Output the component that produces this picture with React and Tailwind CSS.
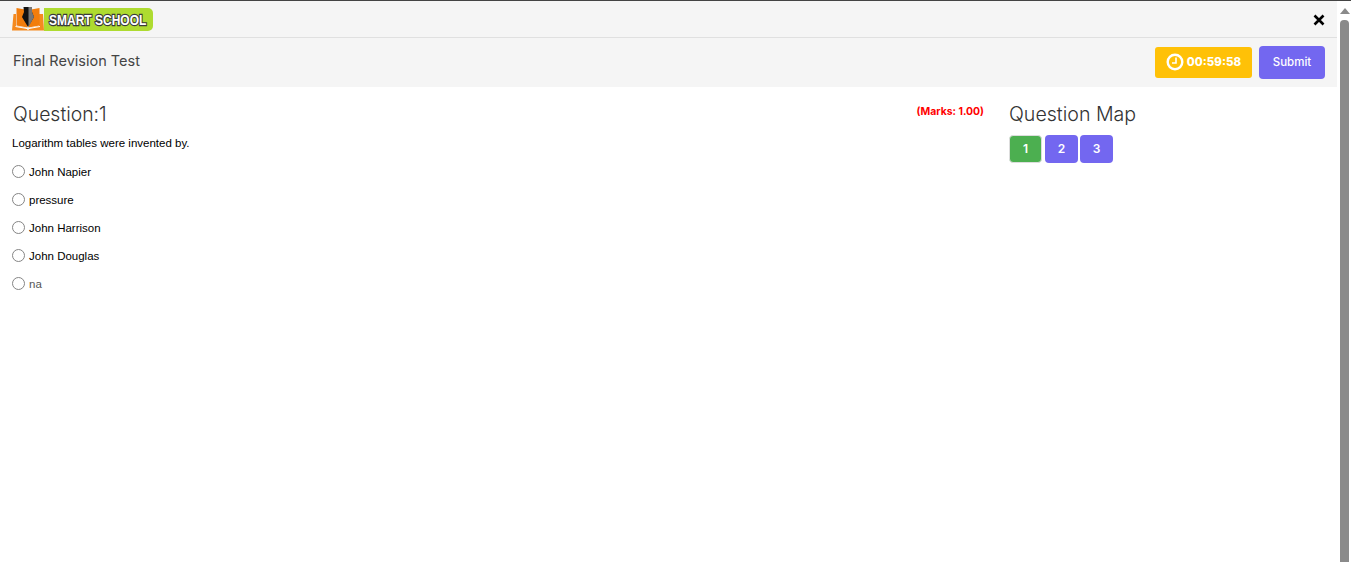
import React from "react";

const inter = "font-['Inter',sans-serif]";
const arial = "font-['Liberation_Sans',Arial,sans-serif]";

function Logo() {
  return (
    <div className="flex items-center h-[24px] w-[141px]">
      <svg width="32" height="24" viewBox="0 0 32 24" className="shrink-0">
        <path d="M0 23.5 L1.5 7 L4 7 L4 19 L14 21 L16 23 L18 21 L27 19 L27 7 L31 7 L32 23.5 Z" fill="#f58a1f" />
        <path d="M4.5 1 L15.5 3 L15.5 20.5 L4.5 18.5 Z" fill="#f27d0c" />
        <path d="M16.5 3 L27.5 1 L27.5 18.5 L16.5 20.5 Z" fill="#f27d0c" />
        <path d="M3.5 19.5 L15 21.5 L16 22.5 L17 21.5 L28 19.5" stroke="#fff" strokeWidth="1" fill="none" />
        <path d="M11.5 0 L20 0 L20 5 L22 10 L16 20 L10 10 L12 5 Z" fill="#111" />
        <path d="M16.5 0 L20 0 L20 5 L22 10 L16.5 20 Z" fill="#777" />
      </svg>
      <div className="flex-1 min-w-0 h-[23px] bg-[#aedb30] rounded-r-[5px] flex items-center pl-[5px]">
        <span className={`${arial} text-[15px] font-bold text-white leading-none [-webkit-text-stroke:2.4px_#3a3a3a] [paint-order:stroke_fill] whitespace-nowrap scale-x-[0.8] origin-left`}>SMART SCHOOL</span>
      </div>
    </div>
  );
}

function Option({ label, muted }) {
  return (
    <label className="flex items-center h-[28px]">
      <span className="w-[13px] h-[13px] rounded-full border border-[#858585] bg-white shrink-0" />
      <span className={`ml-[4px] mt-[4px] text-[11.5px] ${muted ? "text-[#555]" : "text-black"}`}>{label}</span>
    </label>
  );
}

function MapButton({ n, active, className = "" }) {
  return (
    <div className={`w-[33px] h-[28px] rounded-[4px] flex items-center justify-center text-white text-[12px] font-semibold ${inter} ${active ? "bg-[#4caf50] border border-[#ddd]" : "bg-[#7367f0]"} ${className}`}>
      {n}
    </div>
  );
}

export default function App() {
  return (
    <div className={`h-[562px] w-full flex bg-white overflow-hidden border-t border-[#444] ${arial}`}>
      <div className="w-[1337px] shrink-0 flex flex-col">
        <div className="h-[36px] bg-[#f5f5f5] border-b border-[#e0e0e0] flex items-center justify-between pl-[12px] pr-[12px] box-content">
          <Logo />
          <svg width="12" height="12" viewBox="0 0 12 12" className="mt-[1px]">
            <path d="M1.5 1.5 L10.5 10.5 M10.5 1.5 L1.5 10.5" stroke="#000" strokeWidth="2.6" />
          </svg>
        </div>
        <div className="h-[49px] bg-[#f5f5f5] flex items-start justify-between pl-[13px] pr-[12px] pt-[8px]">
          <span className={`${inter} text-[14.5px] leading-[30px] text-[#444]`}>Final Revision Test</span>
          <div className="flex items-center gap-[7px]">
            <div className={`w-[97px] h-[31px] bg-[#ffc107] rounded-[3px] flex items-center justify-center gap-[3px] text-white text-[11.5px] font-extrabold ${inter}`}>
              <svg width="18" height="18" viewBox="0 0 18 18" className="-mt-[1px]">
                <circle cx="9" cy="9" r="7.3" fill="none" stroke="#fff" strokeWidth="2.4" />
                <path d="M10 4.5 V10 H6" fill="none" stroke="#fff" strokeWidth="1.6" />
              </svg>
              00:59:58
            </div>
            <div className={`w-[66px] h-[33px] bg-[#7367f0] rounded-[4px] flex items-center justify-center text-white text-[11.5px] font-medium ${inter}`}>
              Submit
            </div>
          </div>
        </div>
        <div className="flex pt-[15px]">
          <div className="w-[984px] pl-[12px] shrink-0">
            <div className="flex justify-between">
              <div className={`${inter} text-[19.4px] leading-[24px] font-light text-[#333] pl-[1px]`}>Question:1</div>
              <div className={`${inter} text-[10.4px] font-bold text-[#ff0000] leading-[20px]`}>(Marks: 1.00)</div>
            </div>
            <div className="text-[11.5px] text-black mt-[9px] mb-[6px] leading-[16px]">Logarithm tables were invented by.</div>
            <Option label="John Napier" />
            <Option label="pressure" />
            <Option label="John Harrison" />
            <Option label="John Douglas" />
            <Option label="na" muted />
          </div>
          <div className="pl-[25px]">
            <div className={`${inter} text-[19.6px] leading-[24px] font-light text-[#333]`}>Question Map</div>
            <div className="flex mt-[9px]">
              <MapButton n="1" active />
              <MapButton n="2" className="ml-[3px]" />
              <MapButton n="3" className="ml-[2px]" />
            </div>
          </div>
        </div>
      </div>
      <div className="w-[14px] shrink-0 flex flex-col items-center pl-[1px]">
        <svg width="10" height="6" viewBox="0 0 10 6" className="mt-[7px]">
          <path d="M5 0 L10 6 L0 6 Z" fill="#8a8a8a" />
        </svg>
        <div className="w-[9px] flex-1 mt-[6px] bg-[#8a8a8a] rounded-t-[4px]" />
      </div>
    </div>
  );
}
